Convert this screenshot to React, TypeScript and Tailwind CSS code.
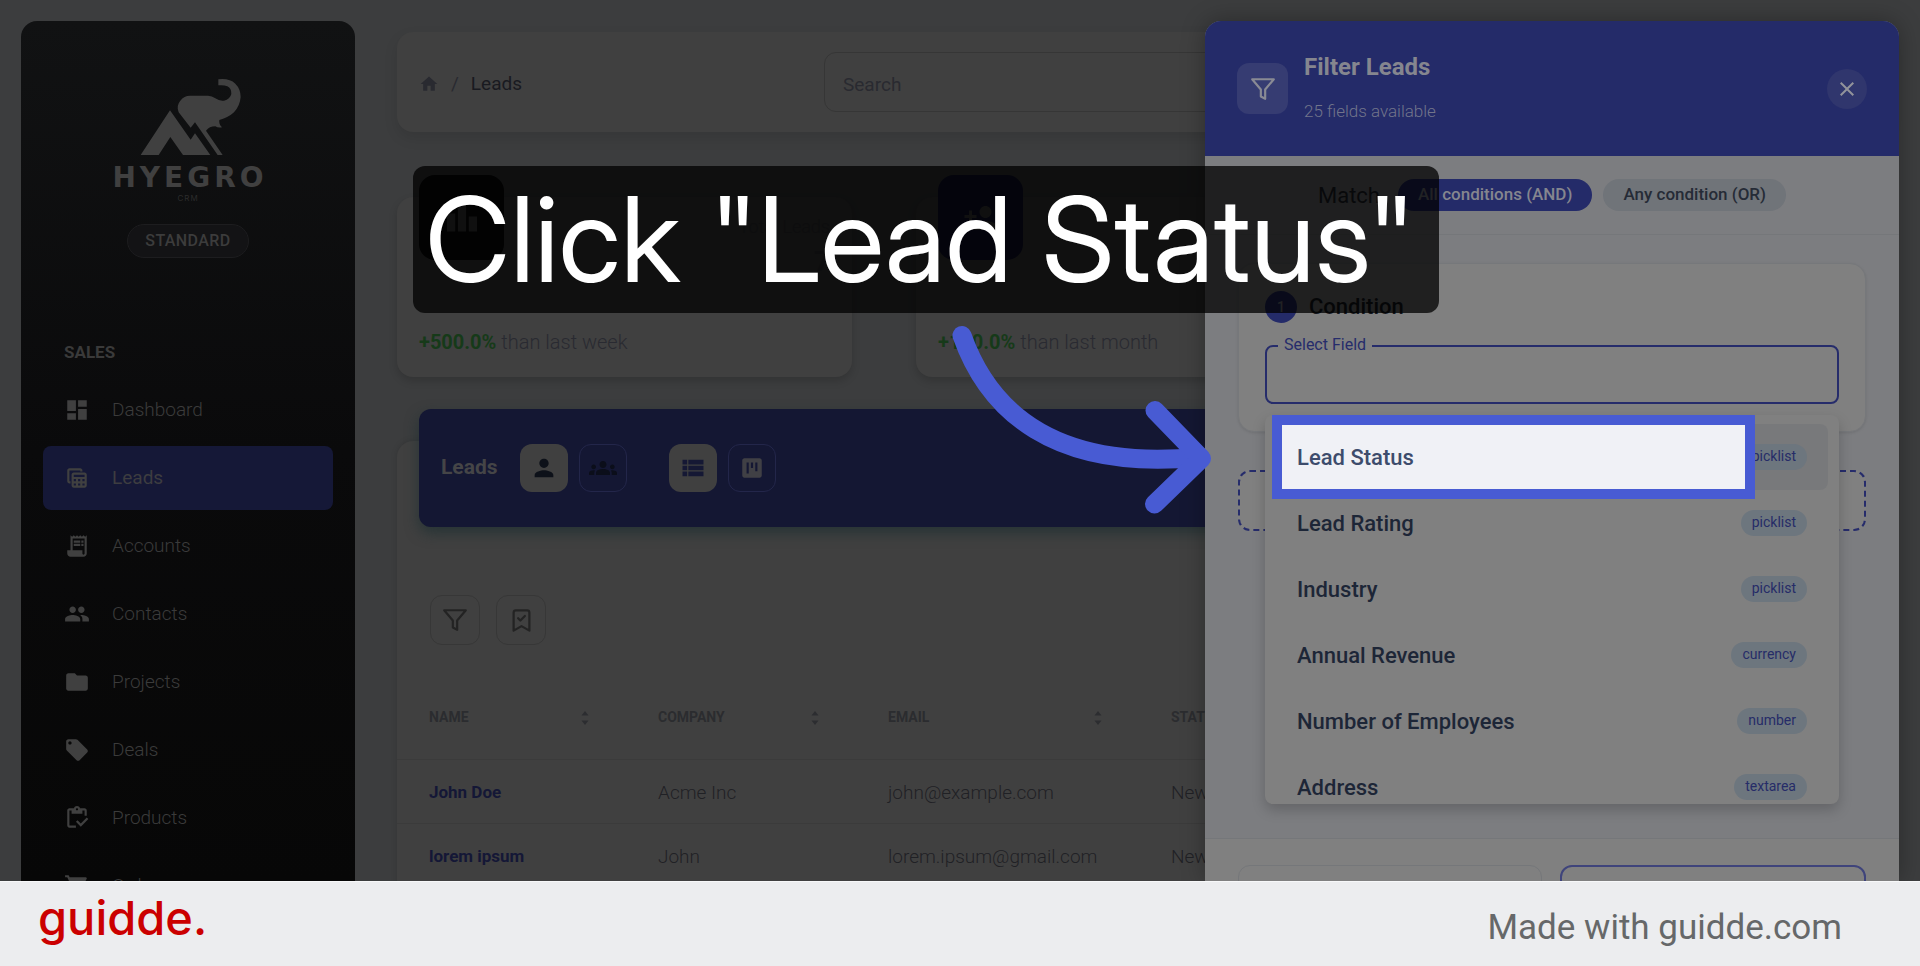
import type { ReactNode } from 'react';
import type { IconType } from 'react-icons';
import {
  MdClose,
  MdDashboard,
  MdFolder,
  MdGroups,
  MdHome,
  MdLeaderboard,
  MdLocalOffer,
  MdOutlineInventory,
  MdPeople,
  MdPerson,
  MdPersonAdd,
  MdReceiptLong,
  MdShoppingCart,
  MdTableView,
  MdViewKanban,
  MdViewList,
} from 'react-icons/md';
import { FiFilter } from 'react-icons/fi';
import { BookmarkCheck } from 'lucide-react';

const navItems: { label: string; icon: IconType; active?: boolean }[] = [
  { label: 'Dashboard', icon: MdDashboard },
  { label: 'Leads', icon: MdTableView, active: true },
  { label: 'Accounts', icon: MdReceiptLong },
  { label: 'Contacts', icon: MdPeople },
  { label: 'Projects', icon: MdFolder },
  { label: 'Deals', icon: MdLocalOffer },
  { label: 'Products', icon: MdOutlineInventory },
  { label: 'Orders', icon: MdShoppingCart },
];

const leads = [
  { name: 'John Doe', company: 'Acme Inc', email: 'john@example.com', status: 'New' },
  { name: 'lorem ipsum', company: 'John', email: 'lorem.ipsum@gmail.com', status: 'New' },
];

const fields = [
  { label: 'Lead Status', type: 'picklist' },
  { label: 'Lead Rating', type: 'picklist' },
  { label: 'Industry', type: 'picklist' },
  { label: 'Annual Revenue', type: 'currency' },
  { label: 'Number of Employees', type: 'number' },
  { label: 'Address', type: 'textarea' },
];

function Logo() {
  return (
    <div className="flex flex-col items-center text-[#404040]">
      <svg width="104" height="78" viewBox="410 235 312 234" overflow="visible" fill="currentColor" aria-hidden="true">
        <path d="M424 466 L512 332 L574 420 L587 401 L633 466 L551 466 L513 412 L478 466 Z" />
        <path d="M574 384 L538 338 Q530 318 543 303 Q554 288 572 288 L626 288 Q638 289 648 296 Q660 305 674 303 Q692 299 696 283 Q697 266 684 260 Q673 255 657 257 L657 239 Q690 235 708 252 Q724 268 724 292 Q722 318 704 338 Q688 353 660 361 Q658 374 668 383 Q656 385 648 380 Q630 380 620 393 L670 466 L655 466 L587 368 Z" />
      </svg>
      <div className="mt-2 pl-1 font-['DejaVu_Sans'] text-[28px] leading-7 font-bold tracking-[4px]">HYEGRO</div>
      <div className="font-['Inter'] text-[8px] leading-3 tracking-[1px] text-[#2c2c2c]">CRM</div>
    </div>
  );
}

function Sidebar() {
  return (
    <aside className="flex w-[334px] shrink-0 flex-col overflow-hidden rounded-t-2xl bg-gradient-to-b from-[#111213] via-[#0a0a0b] to-[#070707] px-[22px] pt-[57px]">
      <Logo />
      <div className="mt-5 flex justify-center">
        <span className="rounded-full border border-[#1d1d1f] bg-[#131315] px-[17px] py-1 text-base font-medium tracking-wide text-[#3c3c3c]">
          STANDARD
        </span>
      </div>
      <div className="mt-[42px] h-px bg-gradient-to-r from-transparent via-[#1c1c1c] to-transparent" />
      <h6 className="mt-[42px] pl-[21px] text-[17px] leading-5 font-bold text-[#3a3a3a]">SALES</h6>
      <nav className="mt-4 flex flex-col gap-1">
        {navItems.map(({ label, icon: Icon, active }) => (
          <a
            key={label}
            href="#"
            className={
              active
                ? 'flex h-16 shrink-0 items-center gap-[22px] rounded-lg bg-[#151837] pl-[21px] text-[19px] text-[#3d3d40]'
                : 'flex h-16 shrink-0 items-center gap-[22px] rounded-lg pl-[21px] text-[19px] font-light text-[#3b3b3b]'
            }
          >
            <Icon className="size-[26px] text-[#404040]" />
            <span>{label}</span>
          </a>
        ))}
      </nav>
    </aside>
  );
}

function StatCard({ icon: Icon, tone, title, value, change, period }: {
  icon: IconType;
  tone: string;
  title: string;
  value: string;
  change: string;
  period: string;
}) {
  return (
    <section className="h-[180px] rounded-2xl bg-[#404040] px-[22px] shadow-[0_4px_8px_rgba(0,0,0,0.16)]">
      <div className="flex h-[125px] justify-between">
        <div className={`-mt-[22px] flex size-[85px] items-center justify-center rounded-2xl ${tone}`}>
          <Icon className="size-9" />
        </div>
        <div className="pt-4 text-right text-[#34353a]">
          <p className="text-lg font-light">{title}</p>
          <p className="text-[28px] font-bold">{value}</p>
        </div>
      </div>
      <p className="pt-1 text-xl leading-8 font-light text-[#292a31]">
        <span className="font-bold text-[#163a19]">{change}</span> {period}
      </p>
    </section>
  );
}

function SortIcon() {
  return (
    <svg width="18" height="18" viewBox="0 0 18 18" fill="#2c2d30" aria-hidden="true">
      <path d="M9 3l3.5 4.5h-7zM9 17l3.5-4.5h-7z" />
    </svg>
  );
}

function HeaderCell({ width, children }: { width: string; children: ReactNode }) {
  return (
    <th className={`px-8 ${width}`}>
      <span className="flex items-center justify-between">
        {children}
        <SortIcon />
      </span>
    </th>
  );
}

function LeadsPanel() {
  return (
    <section className="mt-16 flow-root rounded-t-2xl bg-[#404040] shadow-[0_0_6px_rgba(0,0,0,0.15)]">
      <div className="px-[22px]">
        <div className="-mt-8 flex h-[118px] items-center rounded-xl bg-[#141733] pl-[22px] shadow-[0_6px_14px_rgba(22,44,46,0.6)]">
          <h2 className="w-[79px] text-[21px] font-bold text-[#454547]">Leads</h2>
          <button aria-label="My leads" className="flex size-12 items-center justify-center rounded-xl bg-[#404040] text-[#0d1119]">
            <MdPerson className="size-7" />
          </button>
          <button aria-label="Team leads" className="ml-[11px] flex size-12 items-center justify-center rounded-xl border border-[#23264a] text-[#0b0e1a]">
            <MdGroups className="size-7" />
          </button>
          <button aria-label="List view" className="ml-[42px] flex size-12 items-center justify-center rounded-xl bg-[#404040] text-[#151834]">
            <MdViewList className="size-7" />
          </button>
          <button aria-label="Board view" className="ml-[11px] flex size-12 items-center justify-center rounded-xl border border-[#23264a] text-[#404045]">
            <MdViewKanban className="size-[26px]" />
          </button>
        </div>
      </div>
      <div className="mt-[68px] flex gap-4 px-[33px]">
        <button aria-label="Filter" className="flex size-[50px] items-center justify-center rounded-xl border border-[#373737] text-[#232323]">
          <FiFilter className="size-[26px]" />
        </button>
        <button aria-label="Saved filters" className="flex size-[50px] items-center justify-center rounded-xl border border-[#373737] text-[#232323]">
          <BookmarkCheck className="size-[27px]" />
        </button>
      </div>
      <table className="mt-[31px] w-full table-fixed text-left">
        <thead>
          <tr className="h-[83px] border-b border-[#3b3b3b] text-sm font-bold text-[#2b2c2f]">
            <HeaderCell width="w-[229px]">NAME</HeaderCell>
            <HeaderCell width="w-[230px]">COMPANY</HeaderCell>
            <HeaderCell width="w-[283px]">EMAIL</HeaderCell>
            <HeaderCell width="w-auto">STATUS</HeaderCell>
          </tr>
        </thead>
        <tbody>
          {leads.map((lead) => (
            <tr key={lead.email} className="h-16 border-b border-[#3b3b3b] text-[19px] font-light text-[#202125]">
              <td className="px-8 pt-1 text-[17px] font-bold">
                <a href="#" className="text-[#141736]">{lead.name}</a>
              </td>
              <td className="px-8 pt-1">{lead.company}</td>
              <td className="pt-1 pl-8 whitespace-nowrap">{lead.email}</td>
              <td className="px-8 pt-1">{lead.status}</td>
            </tr>
          ))}
        </tbody>
      </table>
    </section>
  );
}

function FieldMenu() {
  return (
    <ul className="absolute inset-x-0 top-[70px] h-[389px] rounded-lg bg-[#808080] px-[11px] pt-[9px] shadow-[0_6px_14px_rgba(0,0,0,0.2)]">
      {fields.map((field, i) => (
        <li
          key={field.label}
          className={`relative flex h-[66px] items-center justify-between rounded-lg px-[21px] ${i === 0 ? 'bg-[#78797b]' : ''}`}
        >
          <span className={`relative z-10 text-[22px] font-medium ${i === 0 ? 'text-[#3d4c6c]' : 'text-[#1d2637]'}`}>
            {field.label}
          </span>
          <span className="rounded-full bg-[#6d767e] px-[11px] pt-[2px] pb-1 text-sm leading-5 text-[#262c68]">{field.type}</span>
          {i === 0 && (
            <span className="absolute -top-[9px] right-[73px] -left-1 h-[84px] border-[10px] border-[#485bd3] bg-[#f0f1f6]" />
          )}
        </li>
      ))}
    </ul>
  );
}

function FilterDrawer() {
  return (
    <aside className="absolute top-[21px] right-[21px] bottom-0 flex w-[694px] flex-col overflow-hidden rounded-t-2xl bg-[#7c7d80] shadow-[0_0_24px_rgba(0,0,0,0.3)]">
      <header className="flex h-[135px] shrink-0 items-center bg-[#242b69] px-8">
        <div className="flex size-[51px] items-center justify-center rounded-xl bg-[#363c72] text-[#898a94]">
          <FiFilter className="size-[26px]" />
        </div>
        <div className="ml-4 flex-1 pb-[2px]">
          <h2 className="text-2xl font-bold text-[#85868f]">Filter Leads</h2>
          <p className="mt-[14px] text-[17px] leading-7 font-light text-[#72758b]">25 fields available</p>
        </div>
        <button aria-label="Close" className="flex size-10 items-center justify-center rounded-full bg-[#30366d] text-[#92939b]">
          <MdClose className="size-6" />
        </button>
      </header>

      <div className="flex h-[79px] shrink-0 items-center justify-center border-b border-[#75777a]">
        <span className="text-[22px] text-[#23252d]">Match</span>
        <button className="ml-[18px] h-8 rounded-full bg-[#242b69] px-5 pb-[2px] text-[17px] leading-6 font-medium text-[#85868f]">
          All conditions (AND)
        </button>
        <button className="ml-[11px] h-8 rounded-full bg-[#707479] px-5 pb-[2px] text-[17px] leading-6 font-medium text-[#252b36]">
          Any condition (OR)
        </button>
      </div>

      <div className="flex-1 px-[33px] pt-7">
        <section className="h-[169px] rounded-2xl border border-[#76787b] bg-[#808080] px-[26px] pt-[27px] shadow-[0_1px_3px_rgba(0,0,0,0.1)]">
          <div className="flex items-center gap-3">
            <span className="flex size-8 items-center justify-center rounded-full bg-[#242b69] text-sm font-medium text-[#85868f]">1</span>
            <h3 className="text-[22px] leading-8 font-medium text-[#15181f]">Condition</h3>
          </div>
          <div className="relative mt-[22px]">
            <input
              id="field"
              type="text"
              className="block h-[59px] w-full rounded-lg border-2 border-[#262c6b] bg-transparent px-4 text-lg outline-none"
            />
            <label htmlFor="field" className="absolute -top-3 left-[13px] bg-[#808080] px-[6px] text-base text-[#262c6b]">
              Select Field
            </label>
            <FieldMenu />
          </div>
        </section>
        <button aria-label="Add condition" className="mt-[38px] block h-[61px] w-full rounded-xl border-2 border-dashed border-[#262c6b] bg-[#808080]" />
      </div>

      <footer className="flex h-[43px] shrink-0 gap-[18px] border-t border-[#75777a] bg-[#808080] px-[33px] pt-[26px]">
        <button aria-label="Clear" className="h-14 flex-1 rounded-xl border border-[#75777a]" />
        <button aria-label="Apply" className="h-14 flex-1 rounded-xl border-2 border-[#3f447b]" />
      </footer>
    </aside>
  );
}

export default function App() {
  return (
    <div className="flex h-screen flex-col bg-[#ecedef] font-['Roboto',sans-serif]">
      <div className="relative flex-1 overflow-hidden bg-[#3c3d3e]">
        <div className="flex h-full pt-[21px] pl-[21px]">
          <Sidebar />
          <main className="min-w-0 flex-1 pt-[11px] pr-[30px] pl-[42px]">
            <header className="flex h-[100px] items-center rounded-2xl bg-[#404040] shadow-[0_6px_14px_rgba(0,0,0,0.1)]">
              <nav className="flex w-[427px] items-center pt-1 pl-[22px] text-[19px]">
                <MdHome className="size-5 text-[#292a30]" />
                <span className="mx-3 text-[#292a30]">/</span>
                <a href="#" className="text-[#191a20]">Leads</a>
              </nav>
              <input
                type="search"
                aria-label="Search"
                placeholder="Search"
                className="h-[60px] flex-1 rounded-xl border border-[#363636] bg-transparent px-[18px] pt-1 text-[19px] outline-none placeholder:text-[#292a30]"
              />
              <div className="w-8" />
            </header>
            <div className="mt-[65px] grid grid-cols-3 gap-16">
              <StatCard icon={MdLeaderboard} tone="bg-[#080808] text-[#404040]" title="Total Leads" value="7" change="+500.0%" period="than last week" />
              <StatCard icon={MdPersonAdd} tone="bg-[#101231] text-[#404040]" title="New Leads" value="6" change="+100.0%" period="than last month" />
              <StatCard icon={MdPeople} tone="bg-[#102712] text-[#404040]" title="Converted" value="0" change="+0.0%" period="than last month" />
            </div>
            <LeadsPanel />
          </main>
        </div>

        <FilterDrawer />

        <div className="absolute top-[166px] left-[413px] rounded-xl bg-black/75 pr-6 pl-3 font-['Inter_Display','Inter',sans-serif] text-[118px] leading-[147px] whitespace-nowrap text-white">
          Click "Lead Status"
        </div>
        <svg className="absolute top-[320px] left-[940px]" width="280" height="200" viewBox="940 320 280 200" fill="none" stroke="#485bd3" strokeWidth="19" strokeLinecap="round" strokeLinejoin="round" aria-hidden="true">
          <path d="M962 335.5 C988 409 1052 472 1200 457" />
          <path d="M1155 410.500 L1201.500 458.500 L1154.500 504" />
        </svg>
      </div>

      <footer className="flex h-[85px] shrink-0 items-center justify-between border-t border-white/60 px-[38px]">
        <a href="#" className="pb-3 font-['Inter'] text-[47px] leading-[60px] font-medium text-[#cb0000]">guidde.</a>
        <p className="pt-2 pr-10 text-[35px] text-[#666869]">Made with guidde.com</p>
      </footer>
    </div>
  );
}
